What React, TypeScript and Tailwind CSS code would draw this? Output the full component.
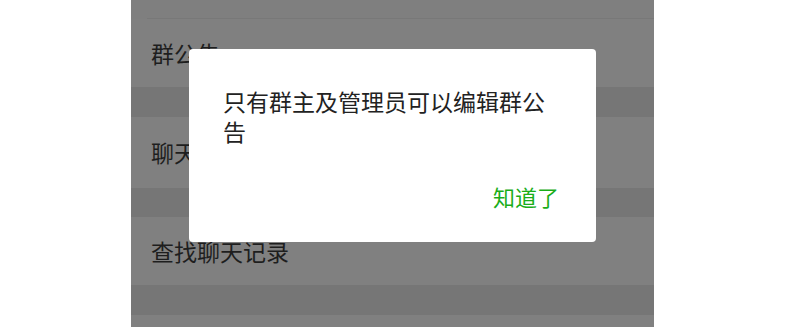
import React from 'react';

const rows = [
  { label: '群公告', h: 'h-[68px]', gap: 'h-[30px]' },
  { label: '聊天置顶', h: 'h-[71px]', gap: 'h-[29px]' },
  { label: '查找聊天记录', h: 'h-[68px]', gap: 'h-[30px]' },
];

const font = { fontFamily: '"Noto Sans CJK SC", "Noto Sans", sans-serif' };

export default function App() {
  return (
    <div className="relative w-[788px] h-[327px] bg-white overflow-hidden" style={font}>
      {/* phone screen behind the mask */}
      <div className="ml-[131px] w-[523px] h-[327px] bg-[#7f7f7f] flex flex-col">
        <div className="h-[19px] pl-4 shrink-0">
          <div className="h-full border-b border-[#787878]" />
        </div>
        {rows.map((r) => (
          <React.Fragment key={r.label}>
            <div className={`${r.h} shrink-0 flex items-center pl-[20px] text-[23px] text-[#1e1e1e] bg-[#808080]`}>
              {r.label}
            </div>
            <div className={`${r.gap} shrink-0 bg-[#767676]`} />
          </React.Fragment>
        ))}
        <div className="flex-1 bg-[#808080]" />
      </div>

      {/* dialog */}
      <div className="absolute left-[189px] top-[49px] w-[407px] h-[193px] bg-white rounded-[4px] flex flex-col pl-[34px] pr-[37px] pt-[37px]">
        <p className="text-[23px] leading-[30px] text-[#222222]">只有群主及管理员可以编辑群公告</p>
        <div className="mt-auto mb-[31px] flex justify-end">
          <button className="text-[22px] leading-[30px] text-[#1aad19]">知道了</button>
        </div>
      </div>
    </div>
  );
}
